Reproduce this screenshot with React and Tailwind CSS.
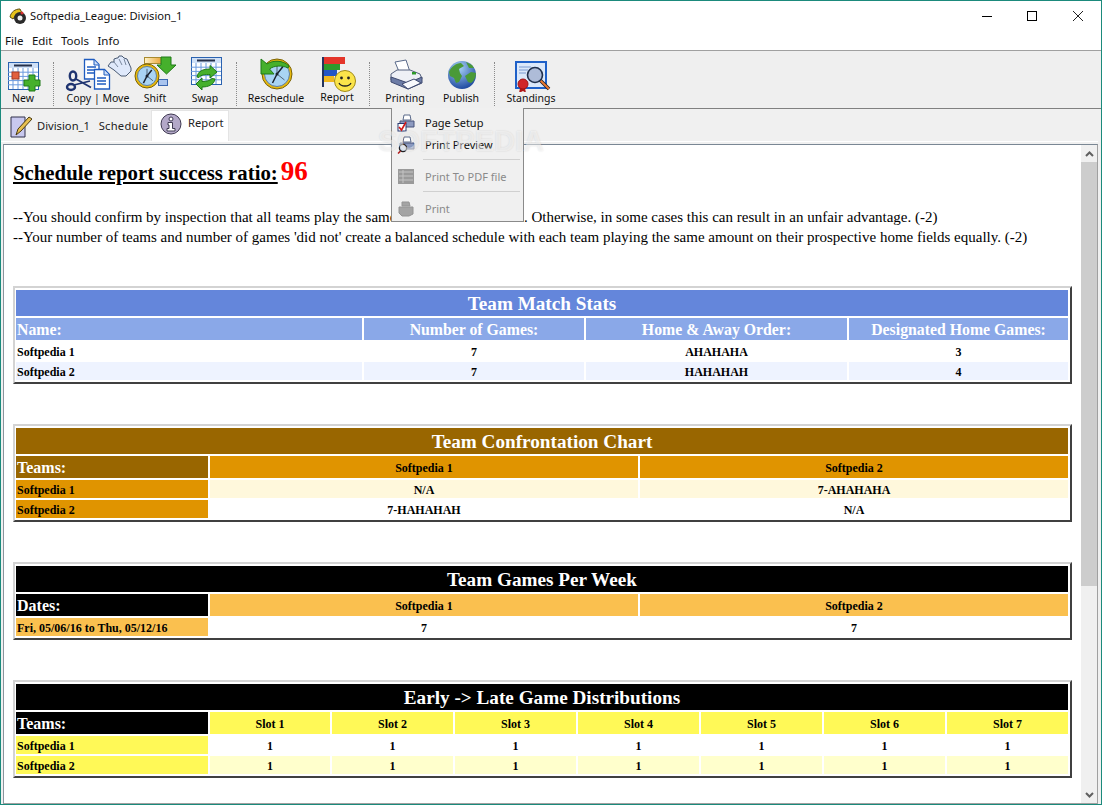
import React from "react";

const ui = { fontFamily: '"Noto Sans", "Open Sans", sans-serif' };
const serif = { fontFamily: '"Liberation Serif", "Times New Roman", serif' };

function Calendar({ x = 8, y = 62, w = 30, h = 27 }) {
  const vs = [1, 2, 3, 4, 5].map((i) => x + (i * w) / 6);
  const hs = [1, 2, 3, 4].map((i) => y + 6 + (i * (h - 6)) / 5);
  return (
    <g>
      <rect x={x + 0.5} y={y + 0.5} width={w} height={h} fill="#fff" stroke="#2a62b0" />
      <rect x={x + 1} y={y + 1} width={w - 1} height="5" fill="#cfe0f7" />
      <rect x={x + 6} y={y + 2.5} width={w - 12} height="2" fill="#26304a" />
      {vs.map((v) => (
        <line key={v} x1={v} x2={v} y1={y + 6} y2={y + h} stroke="#6a9ade" />
      ))}
      {hs.map((v) => (
        <line key={v} y1={v} y2={v} x1={x} x2={x + w} stroke="#6a9ade" />
      ))}
    </g>
  );
}

function Clock({ cx, cy, r }) {
  return (
    <g>
      <circle cx={cx} cy={cy} r={r} fill="#e8b90c" stroke="#7a6206" />
      <circle cx={cx} cy={cy} r={r - 2.5} fill="#a9d4f4" stroke="#5f7fa0" />
      <path d={`M${cx} ${cy}L${cx + r * 0.4} ${cy - r * 0.5}M${cx} ${cy}L${cx - r * 0.3} ${cy + r * 0.6}`} stroke="#1c2430" strokeWidth="1.500" fill="none" />
      <path d={`M${cx} ${cy}V${cy - r * 0.6}M${cx} ${cy}L${cx + r * 0.5} ${cy + r * 0.4}`} stroke="#3a4658" strokeWidth="0.800" fill="none" />
      <circle cx={cx} cy={cy} r="1.500" fill="#1c2430" />
    </g>
  );
}

const tools = [
  {
    label: "New", w: 38, ml: 0,
    icon: (
      <svg width="38" height="37" viewBox="4 55 38 37">
        <Calendar />
        <rect x="12" y="72" width="7" height="7" fill="#e2603e" stroke="#a53a22" />
        <path d="M29 75h6v5h5v6h-5v5h-6v-5h-5v-6h5z" fill="#46b02c" stroke="#1f7a18" />
      </svg>
    ),
  },
  { divider: true, ml: 11 },
  {
    label: "Copy | Move", w: 76, ml: 6,
    icon: (
      <svg width="76" height="37" viewBox="60 55 76 37">
        <path d="M84.500 59.500h9.500l5 5V79H84.500z" fill="#fff" stroke="#1f5cc0" strokeWidth="1.300" />
        <path d="M94 60v5h5" fill="#cfe0f7" stroke="#1f5cc0" />
        <path d="M87 67h9M87 70h9M87 73h9" stroke="#1f5cc0" strokeWidth="1.300" />
        <path d="M94.500 69.500h10l5 5V89H94.500z" fill="#fff" stroke="#1f5cc0" strokeWidth="1.300" />
        <path d="M104 70v5h5" fill="#cfe0f7" stroke="#1f5cc0" />
        <path d="M97 78h9M97 81h9M97 84h9" stroke="#1f5cc0" strokeWidth="1.300" />
        <path d="M76 79L91 87.500M74 85L90 81" stroke="#1f3470" strokeWidth="1.800" fill="none" />
        <ellipse cx="73" cy="76" rx="3.200" ry="4.500" fill="none" stroke="#1f3470" strokeWidth="2.400" />
        <ellipse cx="71" cy="87" rx="4" ry="3" fill="none" stroke="#1f3470" strokeWidth="2.400" />
        <path d="M108 66l3-4 3 0 0-3 3-1 1 0 1-2 3 0 2 2 3 1 4 9 0 3-5 5-5 0-7-6z" fill="#dfe9fb" stroke="#4a5a72" />
        <path d="M114 62l4 5M119 59l3 6M124 59l2 6" stroke="#7a889e" fill="none" />
      </svg>
    ),
  },
  {
    label: "Shift", w: 38, ml: 0,
    icon: (
      <svg width="44" height="37" viewBox="134 55 44 37" className="-mx-[3px]">
        <defs>
          <linearGradient id="bar1" x1="0" x2="1">
            <stop offset="0" stopColor="#fff4c8" />
            <stop offset="1" stopColor="#e8a030" />
          </linearGradient>
        </defs>
        <rect x="145.500" y="57.500" width="18" height="6" fill="url(#bar1)" stroke="#a88a30" />
        <rect x="159.500" y="79.500" width="9" height="6" fill="#a9c4ee" stroke="#3a66b0" />
        <path d="M162 57h10v8h5l-9.500 9-9.500-9h4z" fill="#46b02c" stroke="#1f7a18" />
        <Clock cx={148} cy={76} r={12} />
      </svg>
    ),
  },
  {
    label: "Swap", w: 46, ml: 8,
    icon: (
      <svg width="46" height="37" viewBox="182 55 46 37">
        <Calendar x={191} y={57} w={30} h={27} />
        <path d="M197 77c1-6 6-8 13-8v-3.500l7 6.500-7 6v-3.500c-5 0-9 0-11 3z" fill="#46b02c" stroke="#1f7a18" />
        <path d="M215 79c-1 6-7 8-13 8v3l-6-6 6-6v3.500c5 0 8-1 10-3z" fill="#46b02c" stroke="#1f7a18" />
      </svg>
    ),
  },
  { divider: true, ml: 8 },
  {
    label: "Reschedule", w: 68, ml: 5,
    icon: (
      <svg width="68" height="37" viewBox="242 55 68 37">
        <Clock cx={277} cy={74} r={15} />
        <path d="M261 59V74H274L269.500 69C274 65.500 282 65 288 68L289 66C283 60 273 60 267 64z" fill="#46b02c" stroke="#1f7a18" />
      </svg>
    ),
  },
  {
    label: "Report", w: 54, ml: 0, up: true,
    icon: (
      <svg width="54" height="37" viewBox="310 55 54 37">
        <rect x="322" y="57" width="23" height="7" fill="#e4352a" />
        <rect x="322" y="64" width="18" height="6" fill="#2f9a2c" />
        <rect x="322" y="70" width="15" height="6" fill="#2456c6" />
        <rect x="322" y="76" width="12" height="6" fill="#f0b820" />
        <rect x="322" y="57" width="2" height="30" fill="#24345e" />
        <circle cx="345" cy="81" r="10.500" fill="#fbe44a" stroke="#a08a18" />
        <circle cx="341.500" cy="78" r="1.400" fill="#222" />
        <circle cx="348.500" cy="78" r="1.400" fill="#222" />
        <path d="M339 83c2 4 10 4 12 0" fill="none" stroke="#222" strokeWidth="1.300" />
      </svg>
    ),
  },
  { divider: true, ml: 5 },
  {
    label: "Printing", w: 60, ml: 5,
    icon: (
      <svg width="60" height="37" viewBox="375 55 60 37">
        <path d="M395 62l11-2 4 12-10 2z" fill="#fff" stroke="#5a6a8a" />
        <path d="M391 74l6-4 13 0 10 4 2 5-14 7-17-6z" fill="#eef0f6" stroke="#55617e" />
        <path d="M391 77l17 6 14-6v6l-14 6-17-7z" fill="#6d7ca6" stroke="#3f4a70" />
        <path d="M402 84l12-5 7 4-13 6z" fill="#f8f9fc" stroke="#3f4a70" />
        <rect x="412" y="72" width="4" height="2.500" fill="#2f9a2c" />
      </svg>
    ),
  },
  {
    label: "Publish", w: 52, ml: 0,
    icon: (
      <svg width="52" height="37" viewBox="435 55 52 37">
        <defs>
          <radialGradient id="g1" cx="40%" cy="25%" r="85%">
            <stop offset="0" stopColor="#a9d4f8" />
            <stop offset="1" stopColor="#0f3a96" />
          </radialGradient>
        </defs>
        <circle cx="462" cy="75" r="14" fill="url(#g1)" />
        <path d="M449 72c2-5 7-9 12-9l3 3-5 3 1 4 2 3-3 6-3 1-2-5-4-2zM465 76l6-4 5 1c0 4-2 8-5 10l-3-1z" fill="#4a9a38" />
        <path d="M466 62l6 3 2 3-5 0z" fill="#4a9a38" />
      </svg>
    ),
  },
  { divider: true, ml: 7 },
  {
    label: "Standings", w: 62, ml: 5,
    icon: (
      <svg width="62" height="37" viewBox="500 55 62 37">
        <rect x="516" y="62" width="30" height="26" fill="#dbe8fa" stroke="#1e60c8" strokeWidth="2" />
        <path d="M519 67h12M519 70h9M519 73h7" stroke="#7a9ad0" />
        <path d="M540 80l9 9" stroke="#20202a" strokeWidth="3.500" />
        <path d="M540 80l9 9" stroke="#ef7a30" strokeWidth="1.800" />
        <circle cx="535" cy="75" r="7.500" fill="#aebcd8" stroke="#20304c" strokeWidth="1.600" />
        <path d="M520 88l-1 5 4-2 3 2-1-5z" fill="#b01818" />
        <circle cx="523" cy="84" r="5" fill="#d0262a" stroke="#a01414" />
      </svg>
    ),
  },
];

function Divider({ ml }) {
  return <div style={{ marginLeft: ml }} className="w-px h-[44px] mt-[7px] border-l border-dotted border-[#8a8a8a]" />;
}

function Tool({ t }) {
  return (
    <div style={{ width: t.w, marginLeft: t.ml }} className="flex flex-col items-center shrink-0">
      <div className="h-[36px] flex justify-center items-start">{t.icon}</div>
      <div className={`text-[10.5px] leading-[14px] whitespace-nowrap text-[#111] ${t.up ? "-mt-[1px]" : ""}`}>{t.label}</div>
    </div>
  );
}

function TableBox({ title, titleBg, columns, head, rows, className = "" }) {
  return (
    <div
      style={{ ...serif, gridTemplateColumns: columns }}
      className={`ml-[9px] w-[1059px] grid gap-[2px] pt-[2px] pb-[2px] pl-px pr-[2px] border-2 border-t-[#d3d3d3] border-l-[#d3d3d3] border-r-[#404040] border-b-[#404040] ${className}`}
    >
      <div className={`col-span-full h-[26px] pt-[2px] flex items-center justify-center text-white font-bold text-[19.2px] ${titleBg}`}>{title}</div>
      {head.map((c, i) => (
        <div key={i} className={`h-[22px] pt-[2px] flex items-center font-bold ${c.cls} ${i === 0 ? "pl-[1px]" : "justify-center"}`}>{c.t}</div>
      ))}
      {rows.flatMap((r, ri) =>
        r.map((c, i) => (
          <div key={`${ri}-${i}`} className={`h-[18px] pt-[2px] flex items-center font-bold text-[12px] text-black ${c.cls || ""} ${i === 0 ? "pl-[1px]" : "justify-center"}`}>{c.t}</div>
        ))
      )}
    </div>
  );
}

function MenuIcon({ kind }) {
  if (kind === "setup")
    return (
      <svg width="18" height="18" viewBox="0 0 18 18">
        <path d="M7 1h6l1 5H6z" fill="#fff" stroke="#5a6a8a" />
        <path d="M3 7h14v6H3z" fill="#8d9ac0" stroke="#46537a" />
        <rect x="1" y="9.500" width="8" height="7.500" fill="#fff" stroke="#2a3a70" />
        <path d="M2 13l2.500 3L9 8" fill="none" stroke="#d01818" strokeWidth="1.600" />
      </svg>
    );
  if (kind === "preview")
    return (
      <svg width="18" height="18" viewBox="0 0 18 18">
        <path d="M7 1h6l1 5H6z" fill="#fff" stroke="#5a6a8a" />
        <path d="M3 7h14v6H3z" fill="#8d9ac0" stroke="#46537a" />
        <circle cx="6" cy="12" r="3.600" fill="#d8e2f2" stroke="#222" strokeWidth="1.300" />
        <path d="M3.500 15L1 17.500" stroke="#b01818" strokeWidth="1.500" />
      </svg>
    );
  if (kind === "pdf")
    return (
      <svg width="16" height="16" viewBox="0 0 16 16">
        <rect width="16" height="15" fill="#9a9a9a" />
        <path d="M1 3h14M1 7h14M1 11h14M5 1v13" stroke="#c4c4c4" />
      </svg>
    );
  return (
    <svg width="16" height="16" viewBox="0 0 16 16">
      <path d="M4 1h7l1 4H4zM1 6h14v7l-4 2H4l-3-3z" fill="#a4a4a4" stroke="#949494" />
    </svg>
  );
}

function MenuItem({ icon, text, disabled }) {
  return (
    <div className="flex items-center h-[22px]">
      <div className="w-[27px] pl-[1px] flex justify-center shrink-0"><MenuIcon kind={icon} /></div>
      <span className={`ml-[6px] text-[11px] ${disabled ? "text-[#8a8a8a]" : "text-[#111]"}`}>{text}</span>
    </div>
  );
}

const slots = ["Slot 1", "Slot 2", "Slot 3", "Slot 4", "Slot 5", "Slot 6", "Slot 7"];

export default function App() {
  const blueH = "bg-[#8aa8e8] text-white text-[15.8px]";
  const blueT = "bg-[#6486db]";
  const brownH = "bg-[#996600] text-white text-[16px]";
  const orange = "bg-[#e09400] text-black";
  const lightO = "bg-[#fff8dc]";
  const yellow = "bg-[#fff957] text-black";
  return (
    <div style={ui} className="w-[1102px] h-[805px] overflow-hidden relative bg-[#f0f0f0] border border-[#1b8a7c] flex flex-col">
      {/* title bar */}
      <div className="h-[30px] flex items-center shrink-0 bg-white">
        <svg className="ml-[8px]" width="18" height="17" viewBox="0 0 18 17">
          <path d="M1 9C2 4 6 1 11 1l2 4-6 2-3 4z" fill="#e6c21a" stroke="#5a4a10" />
          <circle cx="11" cy="10" r="6" fill="#2a2a2a" />
          <circle cx="11" cy="10" r="2.500" fill="#eee" />
          <circle cx="13" cy="5" r="1.500" fill="#d83030" />
        </svg>
        <span className="ml-[3px] text-[11.2px] text-[#111]">Softpedia_League: Division_1</span>
        <div className="ml-auto flex items-center text-black mr-[18px]">
          <div className="w-[10px] h-px bg-black mr-[35px]" />
          <div className="w-[10px] h-[10px] border border-black mr-[36px]" />
          <svg width="10" height="10" viewBox="0 0 10 10"><path d="M0 0l10 10M10 0L0 10" stroke="#222" /></svg>
        </div>
      </div>
      {/* menu */}
      <div className="h-[19px] flex items-center text-[11.5px] text-[#111] gap-[8.500px] pl-[4px] pt-[1px] shrink-0 bg-white">
        <span>File</span><span>Edit</span><span>Tools</span><span>Info</span>
      </div>
      {/* toolbar */}
      <div className="h-[59px] shrink-0 bg-[#efefef] border-t border-t-[#a0a0a0] border-b border-b-[#808080] flex pl-[3px] pt-[4px]">
        {tools.map((t, i) => (t.divider ? <Divider key={i} ml={t.ml} /> : <Tool key={i} t={t} />))}
      </div>
      {/* tabs */}
      <div className="h-[32px] shrink-0 flex pl-[2px] items-end">
        <div className="h-[29px] w-[148px] flex items-center text-[11.2px] text-[#222]">
          <svg className="ml-[7px]" width="22" height="24" viewBox="0 0 22 24">
            <path d="M1 2h14v20H1z" fill="#c8c8ee" stroke="#30304a" />
            <path d="M6 20l2-6 11-12 3 2-11 12z" fill="#e8c050" stroke="#4a3a10" />
          </svg>
          <span className="ml-[5px] whitespace-pre">Division_1   <span className="tracking-[0.25px]">Schedule</span></span>
        </div>
        <div className="h-[31px] w-[78px] bg-white border-x border-t border-[#e4e4e4] flex items-center text-[11.2px] text-[#222]">
          <svg className="ml-[8px] -mt-[4px]" width="22" height="22" viewBox="0 0 22 22">
            <circle cx="11" cy="11" r="10" fill="#b3a8c8" stroke="#3f3a52" />
            <circle cx="11" cy="6" r="2" fill="#fff" stroke="#3f3a52" />
            <path d="M8 9.500h4.500v6H15V18H7v-2.500h2V12H8z" fill="#fff" stroke="#3f3a52" />
          </svg>
          <span className="ml-[6px] -mt-[5px]">Report</span>
        </div>
      </div>
      <div className="h-px shrink-0 bg-white mr-[3px]" />
      <div className="h-[2px] shrink-0" />
      {/* content pane */}
      <div className="flex-1 min-h-0 flex border-t border-t-[#7a8794] border-l border-l-[#8a949e] border-r border-r-[#a0a0a0] border-b border-b-[#a0a0a0] ml-[2px] mr-[3px] bg-white">
        <div className="flex-1 min-w-0 overflow-hidden" style={serif}>
          <div className="pl-[9px] pt-[6px] h-[34px] flex items-baseline font-bold text-black">
            <span className="text-[20.8px] underline">Schedule report success ratio:</span>
            <span className="text-[27px] text-[#f00] ml-[3px]">96</span>
          </div>
          <div className="mt-[28px] pl-[9px] text-[15px] leading-[20px] text-black whitespace-nowrap">
            <div>--You should confirm by inspection that all teams play the same number of time slots. Otherwise, in some cases this can result in an unfair advantage. (-2)</div>
            <div>--Your number of teams and number of games 'did not' create a balanced schedule with each team playing the same amount on their prospective home fields equally. (-2)</div>
          </div>
          <TableBox
            className="mt-[39px]"
            title="Team Match Stats"
            titleBg={blueT}
            columns="346px 220px 261px 219px"
            head={[
              { t: "Name:", cls: blueH },
              { t: "Number of Games:", cls: blueH },
              { t: "Home & Away Order:", cls: blueH },
              { t: "Designated Home Games:", cls: blueH },
            ]}
            rows={[
              [{ t: "Softpedia 1" }, { t: "7" }, { t: "AHAHAHA" }, { t: "3" }],
              [
                { t: "Softpedia 2", cls: "bg-[#eef3ff]" },
                { t: "7", cls: "bg-[#eef3ff]" },
                { t: "HAHAHAH", cls: "bg-[#eef3ff]" },
                { t: "4", cls: "bg-[#eef3ff]" },
              ],
            ]}
          />
          <TableBox
            className="mt-[40px]"
            title="Team Confrontation Chart"
            titleBg="bg-[#996600]"
            columns="192px 428px 428px"
            head={[
              { t: "Teams:", cls: brownH },
              { t: "Softpedia 1", cls: `${orange} text-[12px]` },
              { t: "Softpedia 2", cls: `${orange} text-[12px]` },
            ]}
            rows={[
              [{ t: "Softpedia 1", cls: orange }, { t: "N/A", cls: lightO }, { t: "7-AHAHAHA", cls: lightO }],
              [{ t: "Softpedia 2", cls: orange }, { t: "7-HAHAHAH" }, { t: "N/A" }],
            ]}
          />
          <TableBox
            className="mt-[40px]"
            title="Team Games Per Week"
            titleBg="bg-black"
            columns="192px 428px 428px"
            head={[
              { t: "Dates:", cls: "bg-black text-white text-[16px]" },
              { t: "Softpedia 1", cls: "bg-[#fac04f] text-black text-[12px]" },
              { t: "Softpedia 2", cls: "bg-[#fac04f] text-black text-[12px]" },
            ]}
            rows={[[{ t: "Fri, 05/06/16 to Thu, 05/12/16", cls: "bg-[#fac04f]" }, { t: "7" }, { t: "7" }]]}
          />
          <TableBox
            className="mt-[40px]"
            title="Early -> Late Game Distributions"
            titleBg="bg-black"
            columns="192px 120px 121px 121px 121px 121px 121px 121px"
            head={[
              { t: "Teams:", cls: "bg-black text-white text-[16px]" },
              ...slots.map((s) => ({ t: s, cls: `${yellow} text-[12px]` })),
            ]}
            rows={[
              [{ t: "Softpedia 1", cls: yellow }, ...slots.map(() => ({ t: "1" }))],
              [{ t: "Softpedia 2", cls: yellow }, ...slots.map(() => ({ t: "1", cls: "bg-[#ffffcc]" }))],
            ]}
          />
        </div>
        {/* scrollbar */}
        <div className="w-[16px] shrink-0 bg-[#f0f0f0] flex flex-col items-center">
          <div className="h-[17px] flex items-center justify-center">
            <svg width="9" height="6" viewBox="0 0 9 6"><path d="M1 5l3.500-3.500L8 5" fill="none" stroke="#606060" strokeWidth="2" /></svg>
          </div>
          <div className="w-full h-[424px] bg-[#cdcdcd]" />
          <div className="flex-1" />
          <div className="h-[17px] flex items-center justify-center">
            <svg width="9" height="6" viewBox="0 0 9 6"><path d="M1 1l3.500 3.500L8 1" fill="none" stroke="#606060" strokeWidth="2" /></svg>
          </div>
        </div>
      </div>
      {/* dropdown */}
      <div className="absolute left-[390px] top-[107px] w-[133px] h-[114px] bg-[#f0f0f0] border-x border-b border-[#8a8a8a] flex flex-col pt-[4px]">
        <MenuItem icon="setup" text="Page Setup" />
        <MenuItem icon="preview" text="Print Preview" />
        <div className="ml-[31px] mr-[3px] mt-[3px] mb-[6px] h-px bg-[#d0d0d0]" />
        <MenuItem icon="pdf" text="Print To PDF file" disabled />
        <div className="ml-[31px] mr-[3px] mt-[3px] mb-[6px] h-px bg-[#d0d0d0]" />
        <MenuItem icon="print" text="Print" disabled />
      </div>
      {/* watermark */}
      <div className="absolute left-[377px] top-[119px] text-[29px] font-bold text-white/50 [text-shadow:0_0_2px_rgba(0,0,0,0.12)]" style={{ fontFamily: '"Liberation Sans", sans-serif' }}>
        SOFTPEDIA
      </div>
    </div>
  );
}
